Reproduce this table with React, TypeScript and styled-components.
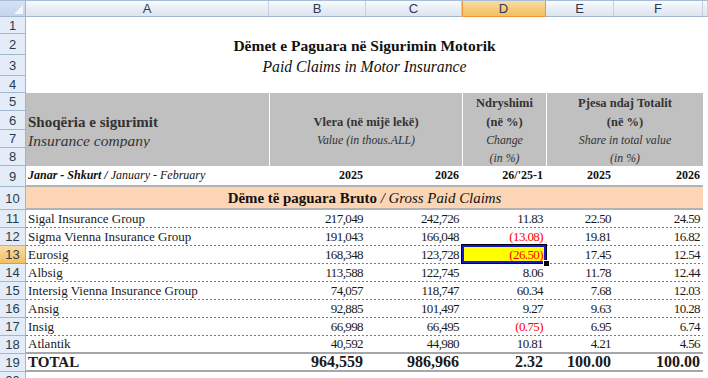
import React from 'react';
import styled, { createGlobalStyle, css } from 'styled-components';

const Global = createGlobalStyle`
  html, body { margin: 0; padding: 0; background: #ffffff; }
  body { width: 708px; height: 378px; overflow: hidden; }
`;

const GRID = '243px 97px 96px 84px 68px 89px';

const Sheet = styled.div`
  width: 708px;
  height: 378px;
  overflow: hidden;
  background: #ffffff;
  display: flex;
  flex-direction: column;
  font-family: "Liberation Serif", "Times New Roman", serif;
  color: #1a1a1a;
`;

const HeaderBar = styled.div`
  display: grid;
  grid-template-columns: 26px ${GRID} 1fr;
  height: 17px;
  flex: none;
  box-sizing: border-box;
  border-top: 1px solid #a7bcd5;
`;

const Corner = styled.div`
  box-sizing: border-box;
  position: relative;
  border-right: 1px solid #9eb6ce;
  border-bottom: 1px solid #9eb6ce;
  background: linear-gradient(#d6e2f2, #c3d4ec);
  &::after {
    content: '';
    position: absolute;
    right: 2px;
    bottom: 2px;
    border-style: solid;
    border-width: 0 0 9px 9px;
    border-color: transparent transparent #f3f6fb transparent;
  }
`;

const ColHead = styled.div<{ $sel?: boolean }>`
  box-sizing: border-box;
  display: flex;
  align-items: center;
  justify-content: center;
  border-right: 1px solid #c3d1e3;
  border-bottom: 1px solid #9eb6ce;
  background: linear-gradient(#f9fbfd, #e7edf5 55%, #dde5ef);
  font: 13px "Liberation Sans", Arial, sans-serif;
  color: #2a3a4f;
  ${p =>
    p.$sel &&
    css`
      background: linear-gradient(#f9dca6, #f5cb7b 55%, #f1c15f);
      border-right-color: #f29436;
      border-bottom-color: #f29436;
      box-shadow: inset 1px 0 0 #f29436;
    `}
`;

const Row = styled.div<{ $h: number }>`
  display: flex;
  flex: none;
  height: ${p => p.$h}px;
`;

const RowHead = styled.div<{ $sel?: boolean }>`
  box-sizing: border-box;
  width: 26px;
  flex: none;
  display: flex;
  align-items: center;
  justify-content: center;
  border-right: 1px solid #9eb6ce;
  border-bottom: 1px solid #9eb6ce;
  background: #e4ecf7;
  font: 13px "Liberation Sans", Arial, sans-serif;
  color: #2a3a4f;
  ${p =>
    p.$sel &&
    css`
      background: linear-gradient(#f9dca6, #f1c15f);
      border-color: #f29436;
    `}
`;

type Rule = 'none' | 'dash' | 'solid' | 'band';

const Body = styled.div<{ $rule?: Rule; $fill?: string }>`
  box-sizing: border-box;
  display: grid;
  grid-template-columns: ${GRID};
  width: 677px;
  flex: none;
  background-color: ${p => p.$fill || 'transparent'};
  ${p =>
    p.$rule === 'dash' &&
    css`
      background-image: linear-gradient(to right, #7a7a7a 50%, transparent 50%);
      background-size: 4px 1px;
      background-position: left bottom;
      background-repeat: repeat-x;
    `}
  ${p =>
    p.$rule === 'solid' &&
    css`
      border-bottom: 2px solid #a6a6a6;
    `}
  ${p =>
    p.$rule === 'band' &&
    css`
      border-bottom: 2px solid #b2b2b2;
    `}
`;

const TitleCell = styled.div<{ $italic?: boolean }>`
  grid-column: 1 / -1;
  display: flex;
  align-items: flex-end;
  justify-content: center;
  padding-bottom: 1px;
  font-size: ${p => (p.$italic ? 15.7 : 15.5)}px;
  line-height: 17px;
  font-weight: ${p => (p.$italic ? 400 : 700)};
  font-style: ${p => (p.$italic ? 'italic' : 'normal')};
  white-space: nowrap;
  color: #111;
`;

const HeadCell = styled.div<{ $span?: number; $sep?: boolean; $align?: string; $size?: number; $italic?: boolean }>`
  grid-column: span ${p => p.$span || 1};
  box-sizing: border-box;
  display: flex;
  align-items: flex-end;
  justify-content: ${p => p.$align || 'center'};
  padding: 0 2px 0;
  background: #c0c0c0;
  border-left: ${p => (p.$sep ? '1px solid #ffffff' : 'none')};
  color: #333333;
  font-size: ${p => p.$size || (p.$italic ? 11.8 : 12.5)}px;
  line-height: 15px;
  font-weight: ${p => (p.$italic ? 400 : 700)};
  font-style: ${p => (p.$italic ? 'italic' : 'normal')};
  white-space: nowrap;
`;

const PeriodCell = styled.div`
  display: flex;
  align-items: flex-end;
  padding: 0 0 2px 2px;
  font-size: 12px;
  line-height: 15px;
  font-style: italic;
  white-space: nowrap;
  color: #111;
  b { font-weight: 700; }
`;

const YearCell = styled.div`
  display: flex;
  align-items: flex-end;
  justify-content: flex-end;
  padding: 0 3px 2px 0;
  font-size: 12px;
  line-height: 15px;
  font-weight: 700;
  color: #111;
`;

const SectionCell = styled.div`
  grid-column: 1 / -1;
  display: flex;
  align-items: flex-end;
  justify-content: center;
  padding-bottom: 1px;
  font-size: 14.9px;
  line-height: 17px;
  white-space: nowrap;
  color: #111;
  b { font-weight: 700; }
  i { font-style: italic; }
`;

const NameCell = styled.div<{ $total?: boolean }>`
  display: flex;
  align-items: flex-end;
  padding: 0 0 1px 2px;
  font-size: ${p => (p.$total ? 15 : 13)}px;
  line-height: 16px;
  font-weight: ${p => (p.$total ? 700 : 400)};
  white-space: nowrap;
`;

const NumCell = styled.div<{ $neg?: boolean; $total?: boolean; $picked?: boolean }>`
  position: relative;
  display: flex;
  align-items: flex-end;
  justify-content: flex-end;
  padding: 0 3px 1px 0;
  font-size: ${p => (p.$total ? 16 : 13)}px;
  letter-spacing: ${p => (p.$total ? 0 : -0.6)}px;
  line-height: 16px;
  font-weight: ${p => (p.$total ? 700 : 400)};
  color: ${p => (p.$neg ? '#ff0000' : 'inherit')};
  background: ${p => (p.$picked ? '#ffff00' : 'transparent')};
`;

const Selection = styled.div`
  position: absolute;
  top: -1px;
  left: 0;
  right: 0;
  bottom: 1px;
  border: 2px solid #1616d8;
  box-shadow: 0 0 0 1px #000000;
  pointer-events: none;
  &::after {
    content: '';
    position: absolute;
    right: -5px;
    bottom: -5px;
    width: 5px;
    height: 5px;
    background: #000;
    box-shadow: 0 0 0 1px #fff;
  }
`;

const companies: string[][] = [
  ['Sigal Insurance Group', '217,049', '242,726', '11.83', '22.50', '24.59'],
  ['Sigma Vienna Insurance Group', '191,043', '166,048', '(13.08)', '19.81', '16.82'],
  ['Eurosig', '168,348', '123,728', '(26.50)', '17.45', '12.54'],
  ['Albsig', '113,588', '122,745', '8.06', '11.78', '12.44'],
  ['Intersig Vienna Insurance Group', '74,057', '118,747', '60.34', '7.68', '12.03'],
  ['Ansig', '92,885', '101,497', '9.27', '9.63', '10.28'],
  ['Insig', '66,998', '66,495', '(0.75)', '6.95', '6.74'],
  ['Atlantik', '40,592', '44,980', '10.81', '4.21', '4.56'],
];

const total = ['964,559', '986,966', '2.32', '100.00', '100.00'];

export default function App() {
  return (
    <>
      <Global />
      <Sheet>
        <HeaderBar>
          <Corner />
          {['A', 'B', 'C', 'D', 'E', 'F', ''].map(c => (
            <ColHead key={c || 'G'} $sel={c === 'D'}>
              {c}
            </ColHead>
          ))}
        </HeaderBar>

        <Row $h={17}>
          <RowHead>1</RowHead>
          <Body />
        </Row>
        <Row $h={21}>
          <RowHead>2</RowHead>
          <Body>
            <TitleCell>Dëmet e Paguara në Sigurimin Motorik</TitleCell>
          </Body>
        </Row>
        <Row $h={21}>
          <RowHead>3</RowHead>
          <Body>
            <TitleCell $italic>Paid Claims in Motor Insurance</TitleCell>
          </Body>
        </Row>
        <Row $h={17}>
          <RowHead>4</RowHead>
          <Body />
        </Row>

        <Row $h={18}>
          <RowHead>5</RowHead>
          <Body>
            <HeadCell />
            <HeadCell $span={2} $sep />
            <HeadCell $sep>Ndryshimi</HeadCell>
            <HeadCell $span={2} $sep>Pjesa ndaj Totalit</HeadCell>
          </Body>
        </Row>
        <Row $h={19}>
          <RowHead>6</RowHead>
          <Body>
            <HeadCell $align="flex-start" $size={15}>Shoqëria e sigurimit</HeadCell>
            <HeadCell $span={2} $sep>Vlera (në mijë lekë)</HeadCell>
            <HeadCell $sep>(në %)</HeadCell>
            <HeadCell $span={2} $sep>(në %)</HeadCell>
          </Body>
        </Row>
        <Row $h={18}>
          <RowHead>7</RowHead>
          <Body>
            <HeadCell $align="flex-start" $size={15.5} $italic>Insurance company</HeadCell>
            <HeadCell $span={2} $sep $italic>Value (in thous.ALL)</HeadCell>
            <HeadCell $sep $italic>Change</HeadCell>
            <HeadCell $span={2} $sep $italic>Share in total value</HeadCell>
          </Body>
        </Row>
        <Row $h={18}>
          <RowHead>8</RowHead>
          <Body>
            <HeadCell />
            <HeadCell $span={2} $sep />
            <HeadCell $sep $italic>(in %)</HeadCell>
            <HeadCell $span={2} $sep $italic>(in %)</HeadCell>
          </Body>
        </Row>

        <Row $h={21}>
          <RowHead>9</RowHead>
          <Body $rule="band">
            <PeriodCell>
              <b>Janar - Shkurt /</b>&nbsp;January - February
            </PeriodCell>
            <YearCell>2025</YearCell>
            <YearCell>2026</YearCell>
            <YearCell>26/'25-1</YearCell>
            <YearCell>2025</YearCell>
            <YearCell>2026</YearCell>
          </Body>
        </Row>
        <Row $h={23}>
          <RowHead>10</RowHead>
          <Body $rule="band" $fill="#fcd5b4">
            <SectionCell>
              <b>Dëme të paguara Bruto</b>&nbsp;<i>/ Gross Paid Claims</i>
            </SectionCell>
          </Body>
        </Row>

        {companies.map((r, i) => {
          const rowNo = 11 + i;
          const last = i === companies.length - 1;
          return (
            <Row key={r[0]} $h={18}>
              <RowHead $sel={rowNo === 13}>{rowNo}</RowHead>
              <Body $rule={last ? 'solid' : 'dash'}>
                <NameCell>{r[0]}</NameCell>
                {r.slice(1).map((v, j) => (
                  <NumCell key={j} $neg={v.startsWith('(')} $picked={rowNo === 13 && j === 2}>
                    {v}
                    {rowNo === 13 && j === 2 && <Selection />}
                  </NumCell>
                ))}
              </Body>
            </Row>
          );
        })}

        <Row $h={18}>
          <RowHead>19</RowHead>
          <Body $rule="solid">
            <NameCell $total>TOTAL</NameCell>
            {total.map((v, j) => (
              <NumCell key={j} $total>
                {v}
              </NumCell>
            ))}
          </Body>
        </Row>
        <Row $h={18}>
          <RowHead>20</RowHead>
          <Body />
        </Row>
      </Sheet>
    </>
  );
}
